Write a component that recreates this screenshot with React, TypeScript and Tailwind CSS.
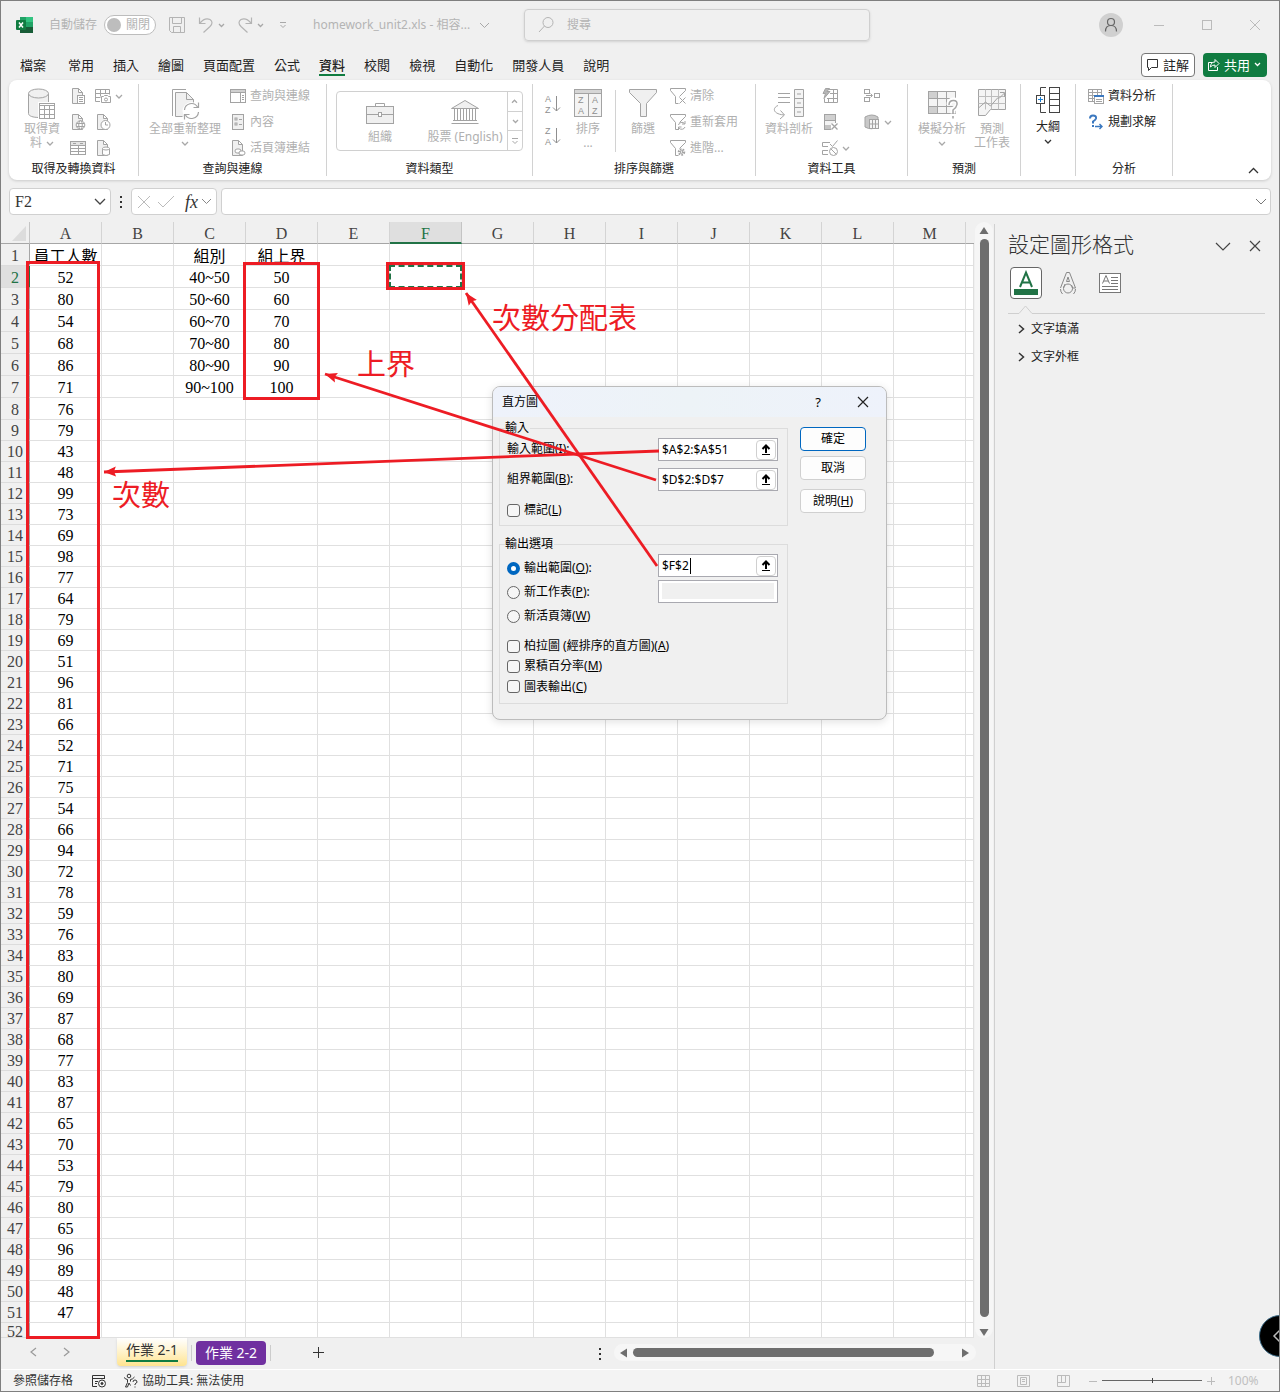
import React from "react";

type P = { children?: React.ReactNode };

const G = "#a3a3a3";

function Svg({ w = 16, h = 16, c = G, sw = 1, f = "none", children }: P & { w?: number; h?: number; c?: string; sw?: number; f?: string }) {
  return (
    <svg className="block shrink-0" width={w} height={h} viewBox={`0 0 ${w} ${h}`} fill={f} stroke={c} strokeWidth={sw} aria-hidden="true">
      {children}
    </svg>
  );
}

function Chev({ c = "#a8a8a8", w = 6, sw = 1.3 }: { c?: string; w?: number; sw?: number }) {
  const h = Math.ceil(w / 2) + 2;
  return (
    <Svg w={w + 2} h={h} c={c} sw={sw}>
      <path d={`M1 1 L${w / 2 + 1} ${w / 2 + 1} L${w + 1} 1`} />
    </Svg>
  );
}

/* ---------- ribbon icons ---------- */
const page = "M2.500 .5 h6 l4 4 v11 h-10 z M8.500 .5 v4 h4";

const IconDatabase = () => (
  <Svg w={32} h={32} f="#f0f0f0">
    <path d="M2.500 5.500 V25.500 C2.500 28 7 29.500 13 29.500 H22.500 V5.500" />
    <ellipse cx="12.500" cy="5.500" rx="10" ry="4.500" />
    <rect x="12" y="14" width="19" height="18" fill="#fff" stroke="none" />
    <rect x="13.500" y="15.500" width="15" height="15" fill="#fff" />
    <path d="M13.500 17.500 h15 M13.500 21.500 h15 M13.500 26.500 h15 M18.500 18 v12 M23.500 18 v12" />
  </Svg>
);
const IconPageText = () => (
  <Svg><path d={page} fill="#f0f0f0" /><rect x="7.500" y="7.500" width="7" height="8" fill="#fff" /><path d="M9 9.500 h4 M9 11.500 h4 M9 13.500 h4" /></Svg>
);
const IconPageGlobe = () => (
  <Svg><path d={page} fill="#f0f0f0" /><circle cx="10.500" cy="11" r="4.300" fill="#fff" /><ellipse cx="10.500" cy="11" rx="1.800" ry="4.300" /><path d="M6.500 9.500 h8 M6.500 12.500 h8" /></Svg>
);
const IconTable = () => (
  <Svg><rect x=".5" y="1.500" width="15" height="13" fill="#fff" /><rect x=".5" y="1.500" width="15" height="4" fill="#e4e4e4" /><path d="M.5 8.500 h15 M.5 11.500 h15 M8.500 6 v8 M3 3.500 h3 M10 3.500 h3" /></Svg>
);
const IconPicture = () => (
  <Svg><path d="M5 13.500 H.5 V1.500 h14 v5 M.5 5.500 h14 M.5 9.500 h5 M5.500 1.500 v7 M10.500 1.500 v4" /><path d="M6.500 8.500 h2 l1-1 h3 l1 1 h2 v6 h-9z" fill="#fff" /><circle cx="11" cy="11.500" r="1.500" /></Svg>
);
const IconPageClock = () => (
  <Svg><path d={page} fill="#f0f0f0" /><circle cx="10.500" cy="11" r="4.500" fill="#fff" /><path d="M10.500 8 v3 h2.500" /></Svg>
);
const IconPageDb = () => (
  <Svg><path d={page} fill="#f0f0f0" /><path d="M7.500 8.500 v6 q3.500 2 7 0 v-6" fill="#fff" /><ellipse cx="11" cy="8.500" rx="3.500" ry="1.500" fill="#fff" /></Svg>
);
const IconRefreshAll = () => (
  <Svg w={32} h={32}>
    <path d="M3.500 28 V1.500 H17" />
    <path d="M6.500 4.500 h11 l7 7 v17 h-18 z" fill="#f0f0f0" stroke="none" />
    <path d="M6.500 28.500 V4.500 h11 l7 7 V15 M17.500 4.500 v7 h7 M6.500 28.500 h7" />
    <circle cx="22.500" cy="23" r="9" fill="#fff" stroke="none" />
    <path d="M15.500 22 A7 7 0 0 1 28.500 19 M29.500 14.500 v5 h-5 M29.500 24 A7 7 0 0 1 16.500 27 M15.500 31.500 v-5 h5" strokeWidth="1.200" />
  </Svg>
);
const IconQueries = () => (
  <Svg><rect x=".5" y="1.500" width="15" height="13" fill="#fff" /><path d="M1 3 h14" stroke="#d0d0d0" strokeWidth="2" /><path d="M.5 4.500 h15 M10.500 4.500 v10 M12 7.500 h2 M12 9.500 h2 M12 11.500 h2" /></Svg>
);
const IconProps = () => (
  <Svg><rect x="2.500" y=".5" width="11" height="15" fill="#f0f0f0" /><rect x="5" y="4" width="2" height="2" /><rect x="5" y="9" width="2" height="2" /><path d="M9 5.500 h3 M9 10.500 h3" /></Svg>
);
const IconPageLink = () => (
  <Svg><path d={page} fill="#f0f0f0" /><rect x="5" y="9" width="6" height="4" rx="2" fill="#fff" /><rect x="9" y="11" width="6" height="4" rx="2" fill="#fff" /></Svg>
);
const IconCase = () => (
  <Svg w={30} h={24}><rect x="1.500" y="5.500" width="27" height="17" fill="#f0f0f0" /><path d="M10.500 5 V2.500 h9 V5 M1.500 13.500 h12 M17 13.500 h11.500" /><rect x="13.500" y="11.500" width="3" height="4" fill="#fff" /></Svg>
);
const IconBank = () => (
  <Svg w={30} h={26}><path d="M1.500 9.500 L15 1.500 L28.500 9.500 z" fill="#f0f0f0" /><path d="M4.500 10 v11 M7.500 10 v11 M10.500 10 v11 M13.500 10 v11 M16.500 10 v11 M19.500 10 v11 M22.500 10 v11 M25.500 10 v11 M3 21.500 h24 M1.500 24.500 h27" /></Svg>
);
const Letters = ({ a, b, x = 0, y = 8, s = 9 }: { a: string; b: string; x?: number; y?: number; s?: number }) => (
  <g stroke="none" fill="#8f8f8f" fontFamily="Liberation Sans" fontSize={s}>
    <text x={x} y={y}>{a}</text>
    <text x={x} y={y + s + 2}>{b}</text>
  </g>
);
const SortIcon = ({ a, b }: { a: string; b: string }) => (
  <Svg w={18} h={22} c="#8f8f8f"><Letters a={a} b={b} x={1} y={9} /><path d="M12.500 3 V18 M9 14.500 l3.500 3.500 l3.500-3.500" /></Svg>
);
const IconSort = () => (
  <Svg w={30} h={32}><rect x="1.500" y="1.500" width="27" height="27" fill="#f4f4f4" /><rect x="1.500" y="1.500" width="27" height="4" fill="#d6d6d6" /><path d="M15.500 6 v22" />
    <Letters a="Z" b="A" x={5} y={15} /><Letters a="A" b="Z" x={19} y={15} /></Svg>
);
const IconFunnel = () => (
  <Svg w={30} h={32}><path d="M1.500 1.500 h27 v3 l-10 11 v13 h-6 v-13 l-11 -11 z" fill="#f0f0f0" /></Svg>
);
const funnelSmall = <path d="M.5 .5 h15 v2 l-6 6 M.5 .5 v2 l5 6 v7 h3" />;
const IconClear = () => <Svg>{funnelSmall}<path d="M9.500 9.500 l6 6 M15.500 9.500 l-6 6" /></Svg>;
const IconReapply = () => <Svg>{funnelSmall}<path d="M8.500 11 a3.500 3.500 0 0 1 6-1.500 M15 7 v3 h-3 M15 13 a3.500 3.500 0 0 1-6 1 M8.500 16 v-3 h3" /></Svg>;
const IconAdvanced = () => <Svg>{funnelSmall}<circle cx="11.500" cy="12" r="2.500" strokeDasharray="1.500 1" strokeWidth="2.500" /><circle cx="11.500" cy="12" r="1.200" fill="#fff" /></Svg>;
const IconSplit = () => (
  <Svg w={32} h={32}><path d="M5 5.500 h12 M5 9.500 h12 M5 14.500 h12 M5 17.500 C-1 20 0 26 11 27 M7.500 22.500 l4 4.500 l-4.500 4" />
    <path d="M21.500 1.500 h9 v27 h-9 z M21.500 10.500 h9 M21.500 19.500 h9 M24 6 h4 M24 15 h4 M24 24 h4" fill="#f4f4f4" /></Svg>
);
const IconFlash = () => (
  <Svg><path d="M6.500 1.500 h9 v13 h-13 v-4 M8 5.500 h7.500 M5 10.500 h10.500 M6.500 10 v4 M11.500 1.500 v13" /><path d="M3.500 .5 h4 l-2.500 3 h3 l-6 7 l1.500-5 h-2.500 z" fill="#b5b5b5" /></Svg>
);
const IconDup = () => (
  <Svg><rect x="2.500" y=".5" width="11" height="15" fill="#f4f4f4" /><rect x="3" y="1" width="10" height="5" fill="#d0d0d0" stroke="none" /><path d="M2.500 6.500 h11" /><rect x="3" y="11" width="6" height="4" fill="#c4c4c4" stroke="none" /><rect x="9" y="9" width="7" height="7" fill="#fff" stroke="none" /><path d="M9.500 9.500 l6 6 M15.500 9.500 l-6 6" strokeWidth="1.300" /></Svg>
);
const IconValid = () => (
  <Svg><path d="M8 2.500 H.5 v4 H6 M6 10.500 H.5 v4 H6 M8 4 l2.500 2.500 l5-6" /><circle cx="11.500" cy="11.500" r="4" /><path d="M9 9 l5 5" /></Svg>
);
const IconConsol = () => (
  <Svg><rect x=".5" y="1.500" width="5" height="4" /><rect x=".5" y="9.500" width="5" height="4" /><rect x="10.500" y="5.500" width="5" height="4" /><path d="M2 7.500 h6 M6.500 5.500 l2 2 l-2 2" /></Svg>
);
const IconModel = () => (
  <Svg><path d="M1 3 Q8 -1 14 3 v9 Q8 17 1 13 z" fill="#c8c8c8" /><rect x="5.500" y="5.500" width="9" height="9" fill="#f4f4f4" /><path d="M8.500 5.500 v9 M11.500 5.500 v9 M5.500 10 h9" /></Svg>
);
const IconWhatIf = () => (
  <Svg w={32} h={32}><rect x="2.500" y="3.500" width="27" height="22" fill="#f4f4f4" /><rect x="2.500" y="3.500" width="9" height="7" fill="#d0d0d0" /><rect x="2.500" y="18.500" width="9" height="7" fill="#d0d0d0" /><path d="M2.500 10.500 h27 M2.500 18.500 h27 M11.500 3.500 v22 M20.500 3.500 v22" />
    <path d="M23 17 q0-5 4.500-5 q4.500 0 4 4.500 q-.5 3-4.500 5 v4 M27 27 v3" stroke="#fff" strokeWidth="5" /><path d="M23 17 q0-4.500 4.500-4.500 q4 0 3.500 4 q-.5 3-4 5.500 v4 M27 28 v2.500" strokeWidth="1.500" /></Svg>
);
const IconForecast = () => (
  <Svg w={32} h={32}><path d="M2.500 1.500 h27 v20 h-15 l-5 6 h-7 z" fill="#f4f4f4" /><path d="M2.500 8.500 h27 M2.500 15.500 h27 M9.500 1.500 v20 M15.500 1.500 v20 M22.500 1.500 v20" stroke="#bdbdbd" /><path d="M2.500 20 l7-6 l5 4 l7-8 h2 l5-5 M24 4.500 h4.500 v4.500" /></Svg>
);
const IconOutline = () => (
  <Svg w={28} h={28} c="#444"><rect x="15.500" y="1.500" width="10" height="25" /><path d="M15.500 7.500 h10 M15.500 13.500 h10 M15.500 19.500 h10 M12 1.500 H6.500 V9 M12 26.500 H6.500 V18" /><rect x="2.500" y="9.500" width="8" height="8" fill="#fff" /><path d="M6.500 11 v5 M4 13.500 h5" stroke="#1a7fd4" /></Svg>
);
const IconAnalysis = () => (
  <Svg><rect x=".5" y="1.500" width="13" height="12" fill="#fff" /><path d="M.5 4.500 h13 M.5 7.500 h13 M.5 10.500 h13 M4.500 1.500 v12 M9.500 1.500 v12" /><rect x="6.500" y="7.500" width="9" height="8" fill="#fff" /><path d="M6 8 h10" stroke="#3b78bf" strokeWidth="2" /><path d="M8 11.500 h6 M8 13.500 h6" /></Svg>
);
const IconSolver = () => (
  <Svg c="#3b78bf" sw={2}><path d="M2 4.500 Q2 1.500 5 1.500 Q8.500 1.500 8 4.500 Q7.500 6 5 7.500 V9.500 M5 11 v2" /><path d="M7 12.500 h7 M11.500 10 l2.500 2.500 l-2.500 2.500" strokeWidth="1.400" /></Svg>
);

/* ---------- ribbon pieces ---------- */
function Group({ label, cls, children }: P & { label?: string; cls: string }) {
  return (
    <section className={"flex shrink-0 flex-col pt-[3px] " + cls}>
      <div className="flex h-[78px]">{children}</div>
      <h3 className="h-4 text-center text-[12px] leading-4 font-normal text-[#222]">{label}</h3>
    </section>
  );
}
const Sep = () => <div className="my-1 w-px shrink-0 bg-[#d2d2d2]" />;

function Big({ icon, lines, chev, cls, dark }: { icon: React.ReactNode; lines: React.ReactNode[]; chev?: boolean; cls: string; dark?: boolean }) {
  return (
    <button className={"flex shrink-0 flex-col items-center pt-[5px] text-[12px] leading-[14px] whitespace-nowrap " + (dark ? "text-[#222] " : "text-[#b0b0b0] ") + cls}>
      <span className="mb-[2px] block h-8">{icon}</span>
      {lines.map((l, i) => (
        <span key={i} className="flex h-[14px] items-center gap-1">{l}</span>
      ))}
      {chev && <span className="flex h-[14px] items-center"><Chev c={dark ? "#333" : undefined} /></span>}
    </button>
  );
}
function Small({ icon, text, chev, dark }: { icon: React.ReactNode; text?: string; chev?: boolean; dark?: boolean }) {
  return (
    <button className={"flex h-[26px] items-center gap-1 text-[12px] leading-4 whitespace-nowrap " + (dark ? "text-[#222]" : "text-[#b0b0b0]")} aria-label={text ?? "指令"}>
      {icon}
      {text}
      {chev && <Chev />}
    </button>
  );
}

const Dots = ({ c = "#333" }: { c?: string }) => (
  <Svg w={4} h={12} f={c} c="none"><path d="M1 0h2v2h-2z M1 5h2v2h-2z M1 10h2v2h-2z" /></Svg>
);

function TitleBar() {
  return (
    <header className="flex h-12 items-center text-[12px] leading-4 text-[#b4b4b4]">
      <div className="ml-[15px]">
        <Svg w={17} h={16} c="none">
          <path d="M4 0h13v16h-13z" fill="#21a366" /><path d="M10 0h7v5h-7z" fill="#33c481" /><path d="M4 5h6v5h-6z" fill="#107c41" /><path d="M10 10h7v6h-13v-6z" fill="#185c37" />
          <rect x="0" y="3" width="10" height="10" rx="1" fill="#107c41" /><path d="M3 5.500 l4 5 M7 5.500 l-4 5" stroke="#fff" strokeWidth="1.500" />
        </Svg>
      </div>
      <span className="ml-4 w-[55px] whitespace-nowrap">自動儲存</span>
      <button role="switch" aria-checked="false" aria-label="自動儲存" className="flex h-5 w-[52px] items-center gap-[5px] rounded-full border border-[#bdbdbd] bg-white pl-[2px] text-[12px] leading-4">
        <span className="size-[14px] rounded-full bg-[#bdbdbd]" />
        <span>關閉</span>
      </button>
      <button aria-label="儲存" className="ml-3">
        <Svg w={18} h={18} c="#b4b4b4"><path d="M1.500 1.500 h15 v15 h-13 l-2-2 z M4.500 1.500 v6 h9 v-6 M5.500 16.500 v-6 h7 v6" /></Svg>
      </button>
      <button aria-label="復原" className="ml-3 flex items-center gap-1">
        <Svg w={16} h={18} c="#b4b4b4" sw={1.200}><path d="M1.500 1.500 v6 h6 M2 7 q5-6 10-3.500 q4 3 0 7 l-6.500 6" /></Svg>
        <Chev w={5} />
      </button>
      <button aria-label="取消復原" className="ml-3 flex items-center gap-1">
        <Svg w={16} h={18} c="#b4b4b4" sw={1.200}><path d="M14.500 1.500 v6 h-6 M14 7 q-5-6-10-3.500 q-4 3 0 7 l6.500 6" /></Svg>
        <Chev w={5} />
      </button>
      <button aria-label="自訂快速存取工具列" className="ml-[15px]">
        <Svg w={8} h={8} c="#a8a8a8"><path d="M1 1.500 h6 M1.500 4 l2.500 2.500 l2.500-2.500" /></Svg>
      </button>
      <button className="ml-[26px] flex w-[177px] items-center justify-between whitespace-nowrap">
        <span>homework_unit2.xls - 相容...</span>
        <Chev w={9} sw={1} />
      </button>
      <label className="ml-[34px] flex h-8 w-[346px] items-center gap-3 rounded border border-[#cfcfcf] pl-3 shadow-sm">
        <Svg w={18} h={18} c="#b4b4b4"><circle cx="11" cy="6.500" r="5" /><path d="M7.500 10 L2 16" /></Svg>
        <input aria-label="搜尋" placeholder="搜尋" className="min-w-0 flex-1 bg-transparent placeholder:text-[#b4b4b4]" />
      </label>
      <div className="ml-auto flex items-center pr-[18px]">
        <button aria-label="帳戶" className="flex size-6 items-center justify-center rounded-full bg-[#d0d0d0]">
          <Svg w={14} h={16} c="#666" sw={1.200}><circle cx="7" cy="5" r="3.500" /><path d="M1.500 14.500 q0-6 5.500-6 q5.500 0 5.500 6" /></Svg>
        </button>
        <button aria-label="最小化" className="ml-[30px]"><Svg w={12} h={12} c="#bbb"><path d="M1 6.500 h10" /></Svg></button>
        <button aria-label="最大化" className="ml-9"><Svg w={12} h={12} c="#bbb"><rect x="1.500" y="1.500" width="9" height="9" /></Svg></button>
        <button aria-label="關閉" className="ml-9"><Svg w={12} h={12} c="#bbb"><path d="M1 1 l10 10 M11 1 l-10 10" /></Svg></button>
      </div>
    </header>
  );
}

const TABS = ["常用", "插入", "繪圖", "頁面配置", "公式", "資料", "校閱", "檢視", "自動化", "開發人員", "說明"];

function TabRow() {
  return (
    <nav className="flex h-[31px] items-center pr-3 pl-[19px] text-[13px] leading-5 text-[#222]">
      <button className="mr-[22px]">檔案</button>
      <div className="flex gap-[19px]">
        {TABS.map((t) => (
          <button key={t} className={t === "資料" ? "relative font-medium after:absolute after:inset-x-0 after:-bottom-px after:h-[2px] after:bg-[#107c41]" : ""}>{t}</button>
        ))}
      </div>
      <button className="ml-auto flex h-6 w-[54px] items-center gap-1 rounded border border-[#777] bg-white pl-1">
        <Svg w={13} h={13} c="#333"><path d="M1.500 1.500 h10 v8 h-6 l-3 3 v-3 h-1z" /></Svg>註解
      </button>
      <button className="ml-2 flex h-6 w-16 items-center gap-1 rounded bg-[#107c41] pl-1 text-white">
        <Svg w={13} h={13} c="#fff"><path d="M5 4.500 H1.500 v8 h9 V9 M3.500 9 q0-5 4.500-5 V1.500 l4 4 l-4 4 V7 q-3 0-4.500 2z" /></Svg>共用
        <Chev c="#fff" w={5} />
      </button>
    </nav>
  );
}

function Ribbon() {
  return (
    <div className="mx-2 flex h-[100px] rounded-lg bg-white shadow-[0_1px_3px_rgba(0,0,0,0.16)]">
      <Group label="取得及轉換資料" cls="w-[129px]">
        <Big cls="ml-[13px] w-10" icon={<IconDatabase />} lines={["取得資", <React.Fragment key="a">料<Chev /></React.Fragment>]} />
        <div className="ml-2 flex flex-col"><Small icon={<IconPageText />} /><Small icon={<IconPageGlobe />} /><Small icon={<IconTable />} /></div>
        <div className="ml-[9px] flex flex-col"><Small icon={<IconPicture />} chev /><Small icon={<IconPageClock />} /><Small icon={<IconPageDb />} /></div>
      </Group>
      <Sep />
      <Group label="查詢與連線" cls="w-[187px]">
        <Big cls="ml-[9px] w-[74px]" icon={<IconRefreshAll />} lines={["全部重新整理"]} chev />
        <div className="ml-2 flex flex-col"><Small icon={<IconQueries />} text="查詢與連線" /><Small icon={<IconProps />} text="內容" /><Small icon={<IconPageLink />} text="活頁簿連結" /></div>
      </Group>
      <Sep />
      <Group label="資料類型" cls="w-[205px]">
        <div className="mt-2 ml-[9px] flex h-[60px] w-[187px] rounded border border-[#d0d0d0] text-[12px] leading-4 text-[#b0b0b0]">
          <button className="flex w-[86px] flex-col items-center justify-end pb-[5px]"><IconCase /><span className="mt-1">組織</span></button>
          <button className="flex flex-1 flex-col items-center justify-end pb-[5px] whitespace-nowrap"><IconBank /><span className="mt-1">股票 (English)</span></button>
          <div className="flex w-[15px] flex-col border-l border-[#d0d0d0]">
            <button aria-label="上一列" className="flex flex-1 rotate-180 items-center justify-center"><Chev w={5} /></button>
            <button aria-label="下一列" className="flex flex-1 items-center justify-center border-y border-[#d0d0d0]"><Chev w={5} /></button>
            <button aria-label="更多" className="flex flex-1 items-center justify-center"><Svg w={8} h={8} c="#a8a8a8"><path d="M1 1.500 h6 M1.500 4 l2.500 2.500 l2.500-2.500" /></Svg></button>
          </div>
        </div>
      </Group>
      <Sep />
      <Group label="排序與篩選" cls="w-[222px]">
        <div className="ml-[11px] flex flex-col gap-[10px] pt-[10px]">
          <button aria-label="從 A 到 Z 排序"><SortIcon a="A" b="Z" /></button>
          <button aria-label="從 Z 到 A 排序"><SortIcon a="Z" b="A" /></button>
        </div>
        <Big cls="ml-[10px] w-8" icon={<IconSort />} lines={["排序", "..."]} />
        <div className="mt-[7px] ml-[11px] h-[62px] w-px bg-[#d2d2d2]" />
        <Big cls="ml-[11px] w-8" icon={<IconFunnel />} lines={["篩選"]} />
        <div className="ml-[11px] flex flex-col"><Small icon={<IconClear />} text="清除" /><Small icon={<IconReapply />} text="重新套用" /><Small icon={<IconAdvanced />} text="進階..." /></div>
      </Group>
      <Sep />
      <Group label="資料工具" cls="w-[151px]">
        <Big cls="ml-2 w-[50px]" icon={<IconSplit />} lines={["資料剖析"]} />
        <div className="ml-2 flex w-[42px] flex-col"><Small icon={<IconFlash />} /><Small icon={<IconDup />} /><Small icon={<IconValid />} chev /></div>
        <div className="flex flex-col"><Small icon={<IconConsol />} /><Small icon={<IconModel />} chev /></div>
      </Group>
      <Sep />
      <Group label="預測" cls="w-[112px]">
        <Big cls="ml-[9px] w-[50px]" icon={<IconWhatIf />} lines={["模擬分析"]} chev />
        <Big cls="ml-[5px] w-10" icon={<IconForecast />} lines={["預測", "工作表"]} />
      </Group>
      <Sep />
      <Group cls="w-[54px]"><Big dark cls="-mt-[2px] ml-[11px] w-8" icon={<IconOutline />} lines={["大綱"]} chev /></Group>
      <Sep />
      <Group label="分析" cls="w-[96px]">
        <div className="ml-3 flex flex-col"><Small dark icon={<IconAnalysis />} text="資料分析" /><Small dark icon={<IconSolver />} text="規劃求解" /></div>
      </Group>
      <Sep />
      <button aria-label="摺疊功能區" className="mr-3 mb-[6px] ml-auto rotate-180 self-end"><Chev w={9} c="#333" /></button>
    </div>
  );
}

function FormulaBar() {
  return (
    <div className="mt-2 flex h-[27px] items-stretch px-2">
      <div className="flex w-[102px] items-center rounded border border-[#d0d0d0] bg-white pr-1">
        <input aria-label="名稱方塊" defaultValue="F2" className="w-0 flex-1 bg-transparent pt-px pl-[5px] font-['Liberation_Serif',serif] text-[16px] leading-5 text-[#333]" />
        <button aria-label="名稱清單"><Chev w={10} c="#444" /></button>
      </div>
      <div className="flex w-5 items-center justify-center"><Dots /></div>
      <div className="flex w-[86px] items-center gap-[6px] rounded border border-[#d0d0d0] bg-white pl-[5px]">
        <button aria-label="取消"><Svg w={14} h={14} c="#bbb"><path d="M1 1 l12 12 M13 1 l-12 12" /></Svg></button>
        <button aria-label="輸入"><Svg w={18} h={14} c="#bbb"><path d="M1 7 l5 5 l11-11" /></Svg></button>
        <button className="flex items-center gap-[3px] pl-1 font-['Liberation_Serif',serif] text-[18px] leading-5 text-[#333] italic">fx<Chev w={9} sw={1} c="#888" /></button>
      </div>
      <label className="ml-1 flex flex-1 items-center rounded border border-[#d0d0d0] bg-white pr-[3px]">
        <input aria-label="資料編輯列" className="min-w-0 flex-1 bg-transparent px-2 text-[12px]" />
        <Chev w={10} sw={1} c="#777" />
      </label>
    </div>
  );
}

/* ---------- worksheet ---------- */
const COLS = "ABCDEFGHIJKLM".split("");
const A = [52, 80, 54, 68, 86, 71, 76, 79, 43, 48, 99, 73, 69, 98, 77, 64, 79, 69, 51, 96, 81, 66, 52, 71, 75, 54, 66, 94, 72, 78, 59, 76, 83, 80, 69, 87, 68, 77, 83, 87, 65, 70, 53, 79, 80, 65, 96, 89, 48, 47];
const C = ["40~50", "50~60", "60~70", "70~80", "80~90", "90~100"];
const D = [50, 60, 70, 80, 90, 100];

function value(col: string, row: number) {
  if (row === 1) return col === "A" ? "員工人數" : col === "C" ? "組別" : col === "D" ? "組上界" : "";
  if (col === "A") return A[row - 2];
  if (col === "C") return C[row - 2];
  if (col === "D") return D[row - 2];
  return "";
}

function Sheet() {
  return (
    <table className="w-full table-fixed border-separate border-spacing-0 font-['Liberation_Serif','Noto_Sans_CJK_TC',serif] text-[16px] leading-5">
      <colgroup>
        <col className="w-[29px]" />
        {COLS.map((c) => <col key={c} className="w-[72px]" />)}
        <col />
      </colgroup>
      <thead>
        <tr className="h-[22px] text-[#444]">
          <th className="border-r border-b border-[#c4c4c4] border-b-[#a6a6a6] p-0">
            <Svg w={27} h={18} c="none"><path d="M25 2 V17 H11z" fill="#dcdcdc" /></Svg>
          </th>
          {COLS.map((c) => (
            <th key={c} className={"p-0 font-normal " + (c === "F" ? "border-r border-b-2 border-r-[#c4c4c4] border-b-[#217346] bg-[#dfdfdf] pt-[3px] leading-[17px] text-[#217346]" : "border-r border-b border-r-[#d4d4d4] border-b-[#a6a6a6] pt-[3px] leading-[18px]")}>{c}</th>
          ))}
          <th className="border-b border-[#a6a6a6] p-0" />
        </tr>
      </thead>
      <tbody>
        {Array.from({ length: 52 }, (_, i) => i + 1).map((r) => (
          <tr key={r} className={r <= 8 ? "h-[22px]" : r === 52 ? "h-[15px]" : "h-[21px]"}>
            <th className={"border-r border-b border-b-[#dcdcdc] p-0 font-normal " + (r === 2 ? "border-r-[#217346] bg-[#dfdfdf] text-[#217346]" : "border-r-[#a6a6a6] text-[#444]")}>
              <div className={r === 52 ? "h-[14px] overflow-hidden leading-[18px]" : "pt-[2px] leading-[18px]"}>{r}</div>
            </th>
            {COLS.map((c) => (
              <td key={c} className="relative border-r border-b border-[#e0e0e0] bg-white p-0 text-center text-black">
                <div className={r === 52 ? "h-[14px]" : r === 1 ? "h-5 overflow-hidden pt-[2px] whitespace-nowrap" : "h-5 pt-px leading-[19px]"}>{value(c, r)}</div>
                {c === "F" && r === 2 && <div className="absolute -inset-px border-2 border-dashed border-[#217346]" />}
              </td>
            ))}
            <td className="border-r border-b border-[#e0e0e0] bg-white p-0" />
          </tr>
        ))}
      </tbody>
    </table>
  );
}

const Tri = ({ d }: { d: string }) => <Svg w={10} h={10} c="none" f="#6e6e6e"><path d={d} /></Svg>;

function VScroll() {
  return (
    <div className="mr-px ml-px flex w-[18px] flex-col items-center rounded-full bg-[#f6f6f6] pt-1">
      <button aria-label="向上捲動"><Tri d="M5 1 L9.500 8 H.5z" /></button>
      <div className="mt-[3px] mb-[11px] w-[9px] flex-1 rounded-full bg-[#6e6e6e]" />
      <button aria-label="向下捲動"><Tri d="M.5 1 H9.500 L5 8z" /></button>
    </div>
  );
}

function SheetTabs() {
  return (
    <div className="flex h-[31px] items-start text-[14px] leading-5">
      <div className="flex h-7 items-center gap-6 pl-7">
        <button aria-label="上一張"><Svg w={9} h={10} c="#999" sw={1.200}><path d="M7 1 L2 5 L7 9" /></Svg></button>
        <button aria-label="下一張"><Svg w={9} h={10} c="#999" sw={1.200}><path d="M2 1 L7 5 L2 9" /></Svg></button>
      </div>
      <button className="ml-[46px] flex h-7 w-[70px] flex-col items-center rounded-b bg-linear-to-b from-white to-[#ffe48f] pt-[2px] whitespace-nowrap text-[#333] shadow">
        <span className="border-b-2 border-[#107c41]">作業 2-1</span>
      </button>
      <div className="mt-[7px] ml-1 h-4 w-px bg-[#ccc]" />
      <button className="mt-[3px] ml-1 h-6 w-[70px] rounded bg-[#7030a0] whitespace-nowrap text-white">作業 2-2</button>
      <div className="mt-[7px] ml-[4px] h-4 w-px bg-[#ccc]" />
      <button aria-label="新增工作表" className="mt-2 ml-[41px]"><Svg w={12} h={12} c="#333"><path d="M6.500 1 v11 M1 6.500 h11" /></Svg></button>
      <div className="ml-auto flex h-[31px] items-center"><Dots /></div>
      <div className="mt-[6px] mr-[18px] ml-3 flex h-[17px] w-[362px] items-center rounded-full bg-[#f6f6f6] px-[5px]">
        <button aria-label="向左捲動"><Tri d="M8 .5 V9.500 L1 5z" /></button>
        <div className="ml-1 h-[9px] flex-1 rounded-full bg-[#6e6e6e]" />
        <button aria-label="向右捲動" className="ml-[27px]"><Tri d="M1 .5 V9.500 L8 5z" /></button>
      </div>
    </div>
  );
}

function FormatPane() {
  return (
    <aside className="mt-[2px] w-[285px] shrink-0 border-l border-[#d0d0d0] pl-[13px]">
      <div className="mt-2 flex h-6 items-center pr-[18px]">
        <h2 className="flex-1 text-[21px] leading-6 font-light text-[#333]">設定圖形格式</h2>
        <button aria-label="窗格選項" className="mt-1 mr-[18px]"><Chev w={14} sw={1.200} c="#444" /></button>
        <button aria-label="關閉窗格" className="mt-1"><Svg w={12} h={12} c="#444" sw={1.200}><path d="M1 1 l10 10 M11 1 l-10 10" /></Svg></button>
      </div>
      <div className="mt-[11px] flex items-center pl-[2px]">
        <button aria-label="文字填滿與外框" className="flex size-8 items-center justify-center rounded border border-[#666] bg-white">
          <Svg w={26} h={26} c="#217346" sw={2}><path d="M7 17 L13 2.500 L19 17 M9 12.500 h8" /><path d="M1 22 h24" strokeWidth="6" /></Svg>
        </button>
        <button aria-label="文字效果" className="ml-[17px]">
          <Svg w={18} h={24} c="#888"><path d="M1.500 17 L7.500 1.500 h3 L16.500 17 h-3 l-1-3 M4.500 17 l1.500-4 M7.500 10.500 L9 6 l1.500 4.500z" /><circle cx="9" cy="17.500" r="4.500" /><path d="M1.500 18 q0 3 2 5 M16.500 18 q0 3-2 5" /></Svg>
        </button>
        <button aria-label="文字方塊" className="ml-[21px]">
          <Svg w={24} h={22} c="#777"><rect x="1.500" y="1.500" width="21" height="19" fill="#fff" /><path d="M4.500 11.500 L8 3.500 L11.500 11.500 M6 9 h4 M13 5.500 h7 M13 8.500 h7 M13 11.500 h7 M4 14.500 h16 M4 17.500 h16" /></Svg>
        </button>
      </div>
      <div className="mt-[6px] mr-[14px] flex items-end">
        <div className="h-px w-[11px] bg-[#cfcfcf]" />
        <Svg w={13} h={9} c="#cfcfcf"><path d="M0 8.500 L6.500 1 L13 8.500" /></Svg>
        <div className="h-px flex-1 bg-[#cfcfcf]" />
      </div>
      <div className="flex flex-col items-start gap-3 pt-[7px] pl-[9px] text-[12px] leading-4 text-[#222]">
        {["文字填滿", "文字外框"].map((t) => (
          <button key={t} className="flex items-center gap-[5px]">
            <Svg w={9} h={10} c="#333" sw={1.500}><path d="M2 1 L6.500 5 L2 9" /></Svg>{t}
          </button>
        ))}
      </div>
    </aside>
  );
}

/* ---------- dialog ---------- */
const boxCls = "m-0 size-[13px] shrink-0 appearance-none rounded-[3px] border border-[#666] bg-[#f6f6f6]";
const radioCls = "m-0 size-[13px] shrink-0 appearance-none rounded-full border border-[#666] bg-[#f6f6f6] checked:border-4 checked:border-[#0067c0] checked:bg-white";

function RangeInput({ id, val, caret }: { id: string; val: string; caret?: boolean }) {
  return (
    <div className="relative flex h-[23px] w-[120px] items-center border border-[#a9a9b0] bg-white pr-px">
      <input id={id} aria-label={id} defaultValue={val} className="w-0 flex-1 bg-transparent pl-[3px] text-[12px] leading-4 text-black" />
      {caret && <span className="absolute top-[3px] left-[31px] h-4 w-px bg-black" />}
      <button aria-label="選取範圍" className="flex h-5 w-5 items-center justify-center rounded border border-[#d0d0d0] bg-white">
        <Svg w={10} h={12} c="#000" sw={2}><path d="M5 9 V2 M1.500 5 L5 1.500 L8.500 5" /><path d="M1 10.500 h8" strokeWidth="1" /></Svg>
      </button>
    </div>
  );
}
const Check = ({ t, k, cls = "h-5" }: { t: string; k: string; cls?: string }) => (
  <label className={"flex items-center gap-1 " + cls}><input type="checkbox" className={boxCls} /><span>{t}(<u>{k}</u>)</span></label>
);

function Dialog() {
  const btn = "h-6 w-[66px] rounded bg-[#fdfdfd] border ";
  return (
    <div role="dialog" aria-label="直方圖" className="absolute top-[386px] left-[492px] w-[395px] overflow-hidden rounded-lg border border-[#bcbcbc] bg-[#f0f0f0] text-[12px] leading-4 text-black shadow-[0_2px_8px_rgba(0,0,0,0.12)]">
      <div className="flex h-[30px] items-center bg-linear-to-r from-[#eef2fb] via-[#edf3f7] to-[#eef2fb] pr-[17px] pl-[9px]">
        <span className="flex-1">直方圖</span>
        <button aria-label="說明" className="mr-9 text-[13px]">?</button>
        <button aria-label="關閉"><Svg w={12} h={12} c="#222" sw={1.200}><path d="M1 1 l10 10 M11 1 l-10 10" /></Svg></button>
      </div>
      <div className="flex gap-3 px-[6px] pt-[3px] pb-[15px]">
        <div className="w-[289px]">
          <fieldset className="border border-[#dcdcdc] pr-[9px] pb-[3px] pl-[7px]">
            <legend className="-ml-[2px] pr-px">輸入</legend>
            <div className="flex flex-col gap-[6px] pt-[2px]">
              <div className="flex h-6 items-start justify-between"><label htmlFor="輸入範圍" className="pt-[3px]">輸入範圍(<u>I</u>):</label><RangeInput id="輸入範圍" val="$A$2:$A$51" /></div>
              <div className="flex h-6 items-start justify-between"><label htmlFor="組界範圍" className="pt-[3px]">組界範圍(<u>B</u>):</label><RangeInput id="組界範圍" val="$D$2:$D$7" /></div>
              <Check t="標記" k="L" cls="h-6" />
            </div>
          </fieldset>
          <fieldset className="mt-[10px] border border-[#dcdcdc] pr-[9px] pb-[6px] pl-[7px]">
            <legend className="-ml-[2px] pr-px">輸出選項</legend>
            <div className="flex justify-between">
              <div className="flex flex-col pt-1">
                <label className="flex h-6 items-center gap-1"><input type="radio" name="out" defaultChecked className={radioCls} /><span>輸出範圍(<u>O</u>):</span></label>
                <label className="flex h-6 items-center gap-1"><input type="radio" name="out" className={radioCls} /><span>新工作表(<u>P</u>):</span></label>
                <label className="flex h-6 items-center gap-1"><input type="radio" name="out" className={radioCls} /><span>新活頁簿(<u>W</u>)</span></label>
              </div>
              <div className="flex flex-col gap-[3px] pt-[2px]">
                <RangeInput id="輸出範圍" val="$F$2" caret />
                <div className="h-[23px] w-[120px] border border-[#a9a9b0] bg-white px-[3px] pt-[2px]"><input aria-label="新工作表名稱" disabled className="block h-4 w-full bg-[#f0f0f0]" /></div>
              </div>
            </div>
            <div className="mt-2 flex flex-col">
              <Check t="柏拉圖 (經排序的直方圖)" k="A" />
              <Check t="累積百分率" k="M" />
              <Check t="圖表輸出" k="C" cls="h-[21px]" />
            </div>
          </fieldset>
        </div>
        <div className="flex flex-col pt-[7px]">
          <button className={btn + "border-[#0067c0]"}>確定</button>
          <button className={btn + "mt-[5px] border-[#d0d0d0]"}>取消</button>
          <button className={btn + "mt-[9px] border-[#d0d0d0]"}>說明(<u>H</u>)</button>
        </div>
      </div>
    </div>
  );
}

/* ---------- red call-outs drawn over the sheet ---------- */
const ARROWS = [
  [659, 451, 104, 472],
  [656, 480, 325, 374],
  [657, 566, 466, 293],
];

function Annotations() {
  const t = "absolute text-[29px] leading-8 whitespace-nowrap text-[#ed1c24]";
  const b = "absolute border-[3px] border-[#ed1c24]";
  return (
    <div className="pointer-events-none absolute inset-0">
      <div className={b + " top-[261px] left-[26px] h-[1078px] w-[74px]"} />
      <div className={b + " top-[262px] left-[243px] h-[138px] w-[77px]"} />
      <div className={b + " top-[262px] left-[386px] h-7 w-[79px]"} />
      <svg className="absolute inset-0 h-full w-full" aria-hidden="true">
        <defs>
          <marker id="tip" markerUnits="userSpaceOnUse" markerWidth="14" markerHeight="12" refX="12" refY="6" orient="auto">
            <path d="M12 6 L0 1 L2 6 L0 11z" fill="#ed1c24" />
          </marker>
        </defs>
        {ARROWS.map(([x1, y1, x2, y2]) => (
          <line key={y1} x1={x1} y1={y1} x2={x2} y2={y2} stroke="#ed1c24" strokeWidth="2.800" markerEnd="url(#tip)" />
        ))}
      </svg>
      <span className={t + " top-[479px] left-[112px]"}>次數</span>
      <span className={t + " top-[348px] left-[357px]"}>上界</span>
      <span className={t + " top-[302px] left-[492px]"}>次數分配表</span>
    </div>
  );
}

function StatusBar() {
  return (
    <footer className="flex h-[22px] items-center border-t border-white bg-[#f3f3f3] pr-[17px] pl-3 text-[12px] leading-4 text-[#333]">
      <span>參照儲存格</span>
      <button aria-label="巨集錄製" className="ml-[18px]"><Svg w={16} h={14} c="#333"><path d="M6 12.500 H1.500 V1.500 h12 V5 M1.500 4.500 h12 M4 7.500 h3 M4 9.500 h2" /><circle cx="11" cy="9.500" r="3.500" /><circle cx="11" cy="9.500" r="1" fill="#333" /></Svg></button>
      <button className="ml-4 flex items-center gap-1 whitespace-nowrap">
        <Svg w={15} h={15} c="#333"><circle cx="6" cy="3" r="1.800" /><path d="M1 4.500 q2 2 3.500 2 v3 l-2 4.500 h2 l1.500-4 l1.500 2.500 M11.500 4 q-2 2.500-4 2.500 v2 M10 9 q0-2 2-2 q2 0 2 2 q0 1-2 2 v1 M12 13.500 v1" /></Svg>
        協助工具: 無法使用
      </button>
      <div className="ml-auto flex items-center text-[#c0c0c0]">
        <button aria-label="標準模式"><Svg w={14} h={14} c="#bbb"><path d="M1.500 1.500 h12 v11 h-12z M1.500 5.500 h12 M1.500 9.500 h12 M5.500 1.500 v11 M9.500 1.500 v11" /></Svg></button>
        <button aria-label="整頁模式" className="ml-[26px]"><Svg w={14} h={14} c="#bbb"><path d="M1.500 1.500 h12 v11 h-12z M4.500 3.500 h6 v7 h-6z M6 5.500 h3 M6 7.500 h3" /></Svg></button>
        <button aria-label="分頁預覽" className="ml-[26px]"><Svg w={14} h={14} c="#bbb"><path d="M1.500 1.500 h12 v11 h-12z M1.500 8.500 h8 V1.500 M5.500 1.500 v7" /></Svg></button>
        <button aria-label="縮小" className="ml-[18px]"><Svg w={10} h={10} c="#bbb"><path d="M1 5.500 h8" /></Svg></button>
        <input type="range" aria-label="顯示比例" className="mx-1 h-[7px] w-[100px] appearance-none bg-transparent [&::-webkit-slider-runnable-track]:h-px [&::-webkit-slider-runnable-track]:bg-[#666] [&::-webkit-slider-thumb]:-mt-[2px] [&::-webkit-slider-thumb]:h-[5px] [&::-webkit-slider-thumb]:w-px [&::-webkit-slider-thumb]:appearance-none [&::-webkit-slider-thumb]:bg-[#444]" />
        <button aria-label="放大"><Svg w={10} h={10} c="#bbb"><path d="M1 5.500 h8 M5.500 1 v8" /></Svg></button>
        <span className="ml-3 w-[34px]">100%</span>
      </div>
    </footer>
  );
}

export default function App() {
  return (
    <div className="relative overflow-hidden border border-[#7f7f7f] bg-[#f0f0f0] font-['Noto_Sans','Noto_Sans_CJK_TC',sans-serif]">
      <TitleBar />
      <TabRow />
      <Ribbon />
      <FormulaBar />
      <div className="mt-[7px] flex">
        <div className="min-w-0 flex-1">
          <div className="flex">
            <div className="min-w-0 flex-1"><Sheet /></div>
            <VScroll />
          </div>
          <SheetTabs />
        </div>
        <FormatPane />
      </div>
      <StatusBar />
      <div className="absolute inset-0 -m-px">
        <Dialog />
        <Annotations />
      </div>
      <button aria-label="展開側欄" className="absolute -right-[22px] bottom-[34px] flex size-[42px] items-center rounded-full border border-[#3a6a86] bg-black pl-3">
        <Svg w={10} h={18} c="#bbb" sw={1.500}><path d="M9 2 L2 9 L9 16" /></Svg>
      </button>
    </div>
  );
}
